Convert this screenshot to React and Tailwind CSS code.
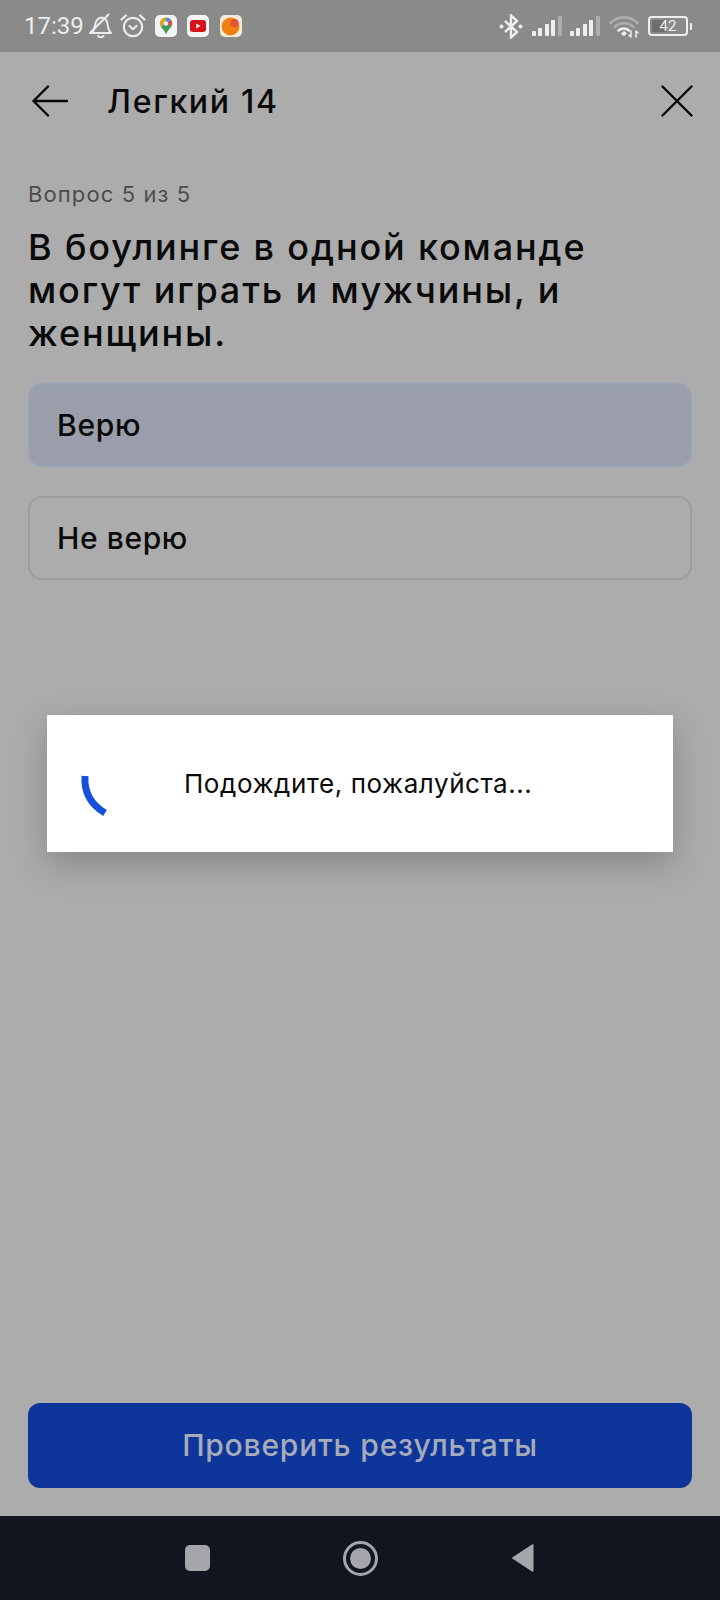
import React from "react";

function StatusIcons() {
  return (
    <div className="flex items-center">
      {/* bell off */}
      <svg className="ml-[4px]" width="25" height="26" viewBox="0 0 24 26" fill="none" stroke="#ececec" strokeWidth="2" strokeLinejoin="round" strokeLinecap="round">
        <path d="M2.500 20c2.500-1.800 3.500-3.500 4-7 .5-5 2.500-8 6.500-8.500 3.800.3 5.500 3 6 6.500.5 4 1 6.500 3.500 9H2.500z" />
        <path d="M9.500 23c1.500 1.600 4 1.600 5.500 0" />
        <path d="M1.500 20 20 1.500" />
      </svg>
      {/* alarm */}
      <svg className="ml-[7px]" width="26" height="24" viewBox="0 0 26 24" fill="none" stroke="#ececec" strokeWidth="2.200" strokeLinecap="round" strokeLinejoin="round">
        <circle cx="13" cy="13" r="9.200" />
        <path d="M9.500 12l3.500 3.200 3.500-3.200" />
        <path d="M1.500 5.500 6 1.500M24.500 5.500 20 1.500" />
      </svg>
      {/* maps */}
      <div className="ml-[9px] flex h-[22px] w-[22px] items-center justify-center rounded-[5px] bg-[#f4f4f4]">
        <svg width="14" height="18" viewBox="0 0 14 18">
          <path d="M7 0.500C3.300 0.500 0.800 3.200 0.800 6.500c0 1.300.4 2.300 1 3.300L7 5z" fill="#d9a61c" />
          <path d="M7 0.500c2 0 3.600.8 4.700 2.100L7 7z" fill="#4285f4" />
          <path d="M11.700 2.600c1 1 1.500 2.400 1.500 3.900 0 1.200-.4 2.200-1 3.200L7 7z" fill="#c9564a" />
          <path d="M2 9.800l5-4.600 5.200 4.500C10.600 12.300 8 14 7 17.500 6 14 3.500 12.300 2 9.800z" fill="#3f9b55" />
          <circle cx="7" cy="6.500" r="2.300" fill="#f4f4f4" />
        </svg>
      </div>
      {/* youtube */}
      <div className="ml-[10px] flex h-[22px] w-[22px] items-center justify-center rounded-[5px] bg-[#f4f4f4]">
        <svg width="16" height="12" viewBox="0 0 16 12">
          <rect width="16" height="12" rx="3" fill="#d3121a" />
          <path d="M6.300 3.500v5l4.200-2.500z" fill="#f4f4f4" />
        </svg>
      </div>
      {/* orange */}
      <div className="ml-[11px] flex h-[22px] w-[22px] items-center justify-center rounded-[5px] bg-[#f2eadb]">
        <svg width="19" height="19" viewBox="0 0 19 19">
          <circle cx="9.500" cy="9.500" r="9" fill="#f0800f" />
          <circle cx="13.500" cy="6" r="4" fill="#e8503a" />
        </svg>
      </div>
    </div>
  );
}

function Signal() {
  return (
    <svg width="30" height="20" viewBox="0 0 30 20">
      <rect x="0" y="15" width="4" height="5" rx="1" fill="#efefef" />
      <rect x="6" y="12" width="4" height="8" rx="1" fill="#efefef" />
      <rect x="13" y="8" width="4" height="12" rx="1" fill="#efefef" />
      <rect x="19" y="4" width="4" height="16" rx="1" fill="#efefef" />
      <rect x="26" y="0" width="4" height="20" rx="1" fill="#adadad" />
    </svg>
  );
}

function StatusRight() {
  return (
    <div className="flex items-center">
      <svg width="24" height="25" viewBox="0 0 24 25" fill="none" stroke="#efefef" strokeWidth="2.400" strokeLinejoin="miter">
        <path d="M6 7l12 11-6 5.500V1.500l6 5.500L6 18" />
        <circle cx="2.500" cy="12.500" r="2" fill="#efefef" stroke="none" />
        <circle cx="21.500" cy="12.500" r="2" fill="#efefef" stroke="none" />
      </svg>
      <div className="ml-[9px]"><Signal /></div>
      <div className="ml-[8px]"><Signal /></div>
      <svg className="ml-[9px]" width="30" height="23" viewBox="0 0 30 23" fill="none" strokeLinecap="round">
        <path d="M1.500 8C9 0.500 21 0.500 28.500 8" stroke="#adadad" strokeWidth="2.600" />
        <path d="M5.500 12C10.500 7 19.500 7 24.500 12" stroke="#adadad" strokeWidth="2.600" />
        <path d="M9.500 15.500C12.500 12.800 17 12.800 20 15.500" stroke="#efefef" strokeWidth="2.600" />
        <path d="M12.500 18.500 15 16.500l2.500 2L15 20.500z" fill="#efefef" stroke="#efefef" />
        <path d="M22 16v6M20 20l2 2M27 16v6M27 16l2 2" stroke="#efefef" strokeWidth="1.500" />
      </svg>
      <div className="ml-[9px] flex items-center">
        <div className="relative flex h-[20px] w-[40px] items-center rounded-[4px] border-[2px] border-[#efefef] p-[2px]">
          <div className="h-full w-[15px] rounded-[1px] bg-[#6e6e6e]" />
          <span className="absolute inset-0 flex items-center justify-center text-[15px] leading-none text-[#f2f2f2] [font-family:Roboto,sans-serif]">42</span>
        </div>
        <div className="ml-[2px] h-[7px] w-[2px] rounded-r-[1px] bg-[#efefef]" />
      </div>
    </div>
  );
}

export default function App() {
  return (
    <div className="relative flex h-[1600px] w-[720px] flex-col overflow-hidden bg-[#acacac] text-[#0a0a0a] [font-family:Inter,'Noto_Sans',sans-serif]">
      <div className="flex h-[52px] items-center justify-between bg-[#8a8a8a] pl-[24px] pr-[28px]">
        <div className="flex items-center">
          <span className="text-[24px] leading-none text-[#ededed] [font-family:Roboto,sans-serif]">17:39</span>
          <StatusIcons />
        </div>
        <StatusRight />
      </div>

      <div className="flex h-[98px] items-center pl-[32px] pr-[27px]">
        <svg width="36" height="32" viewBox="0 0 36 32" fill="none" stroke="#0a0a0a" strokeWidth="2.400" strokeLinecap="round" strokeLinejoin="round">
          <path d="M35 16H1.500M16 1.500 1.500 16 16 30.500" />
        </svg>
        <span className="ml-[39px] mt-[2px] text-[32px] font-medium leading-none tracking-[1.7px]">Легкий 14</span>
        <svg className="ml-auto" width="32" height="32" viewBox="0 0 32 32" fill="none" stroke="#0a0a0a" strokeWidth="2.400" strokeLinecap="round">
          <path d="M1.500 1.500l29 29M30.500 1.500l-29 29" />
        </svg>
      </div>

      <div className="flex flex-1 flex-col px-[28px]">
        <p className="mt-[31px] text-[22px] leading-[26px] tracking-[1.1px] text-[#4c4c4c]">Вопрос 5 из 5</p>
        <h1 className="mt-[19px] text-[36px] font-medium leading-[43px] tracking-[1.85px]">
          В боулинге в одной команде
          <br />
          могут играть и мужчины, и
          <br />
          женщины.
        </h1>
        <div className="mt-[28px] flex h-[84px] items-center rounded-[14px] border-2 border-[#98a2b9] bg-[#9a9eab] px-[27px] text-[30px] font-medium tracking-[0.7px]">
          Верю
        </div>
        <div className="mt-[29px] flex h-[84px] items-center rounded-[14px] border-2 border-[#9d9d9d] px-[27px] text-[30px] font-medium tracking-[0.6px]">
          Не верю
        </div>

        <button className="mb-[28px] mt-auto flex h-[85px] items-center justify-center rounded-[12px] bg-[#0e369a] text-[30px] font-medium tracking-[0.8px] text-[#a6abb8]">
          Проверить результаты
        </button>
      </div>

      <div className="flex h-[84px] items-center bg-[#111520] pl-[185px]">
        <div className="h-[26px] w-[25px] rounded-[5px] bg-[#a5a6aa]" />
        <div className="ml-[133px] flex h-[35px] w-[35px] items-center justify-center rounded-full border-[3px] border-[#a5a6aa]">
          <div className="h-[21px] w-[21px] rounded-full bg-[#a5a6aa]" />
        </div>
        <svg className="ml-[132px]" width="24" height="30" viewBox="0 0 24 30">
          <path d="M22 1.500 1.500 15 22 28.500c1 .5 1.500 0 1.500-1v-25c0-1-.5-1.500-1.500-1z" fill="#a5a6aa" />
        </svg>
      </div>

      <div className="absolute left-[47px] top-[715px] flex h-[137px] w-[626px] items-center bg-white shadow-[0_12px_32px_rgba(0,0,0,0.22)]">
        <svg className="ml-[32px] mt-[24px] shrink-0" width="30" height="42" viewBox="0 0 30 42" fill="none">
          <path d="M6 1C5 16 11 29 26 38" stroke="#1450dc" strokeWidth="7" />
        </svg>
        <span className="ml-[75px] text-[26px] leading-none tracking-[0.55px]">Подождите, пожалуйста...</span>
      </div>
    </div>
  );
}
